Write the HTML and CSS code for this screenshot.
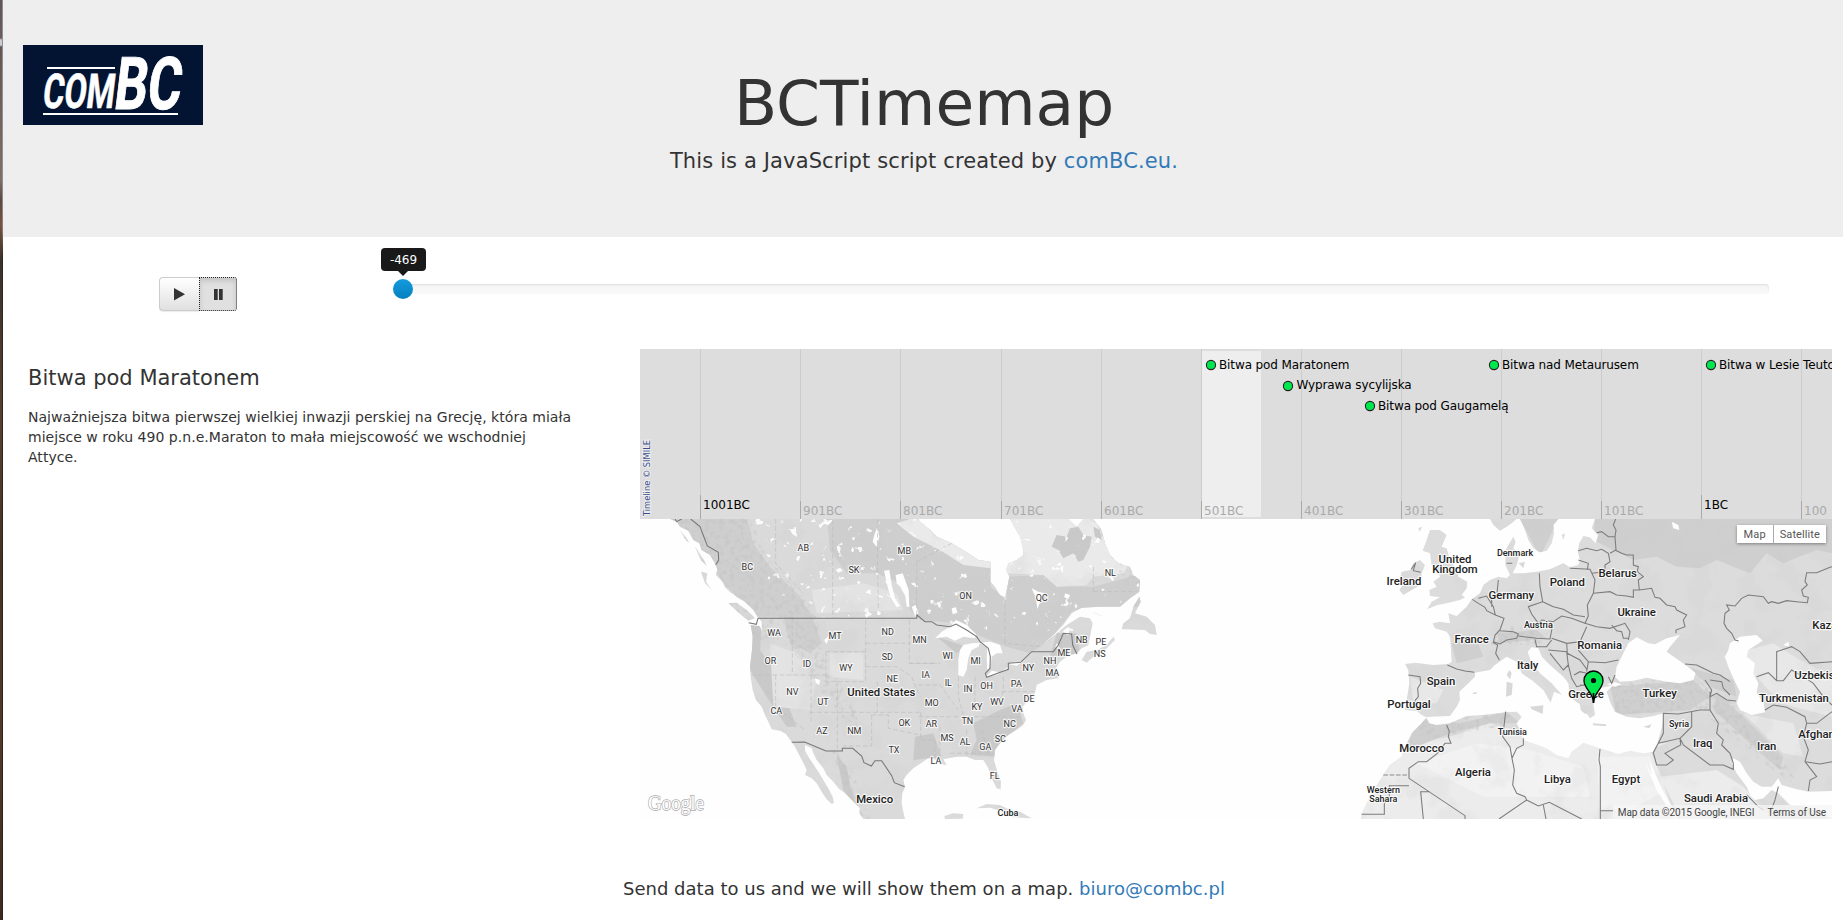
FILE: index.html
```html
<!DOCTYPE html>
<html lang="en">
<head>
<meta charset="utf-8">
<title>BCTimemap</title>
<link rel="stylesheet" href="styles.css">
</head>
<body>
<div class="edge"></div>
<main class="page">
  <header class="jumbotron">
    <svg class="logo" viewBox="0 0 180 80" width="180" height="80">
      <rect width="180" height="80" fill="#031432"/>
      <path d="M24 23H92M20 69H155" stroke="#fff" stroke-width="2"/>
      <g fill="#fff" stroke="#fff" font-family="Roboto" font-weight="700">
        <text transform="translate(18.500 62.500) skewX(-7)" font-size="48" stroke-width=".6" textLength="72" lengthAdjust="spacingAndGlyphs">COM</text>
        <text transform="translate(89.500 63.500) skewX(-7)" font-size="73" stroke-width="1" textLength="67" lengthAdjust="spacingAndGlyphs">BC</text>
      </g>
    </svg>
    <h1 class="title">BCTimemap</h1>
    <p class="lead">This is a JavaScript script created by <a href="#">comBC.eu.</a></p>
  </header>

  <section class="controls">
    <div class="btn-group">
      <button class="btn"><svg width="11" height="13" viewBox="0 0 11 13"><path d="M0 0 11 6.2 0 12.4z" fill="#333"/></svg></button>
      <button class="btn active"><svg width="9" height="11" viewBox="0 0 9 11"><path d="M0 0h3.7v11H0zM5 0h3.7v11H5z" fill="#333"/></svg></button>
    </div>
    <div class="slider">
      <div class="track"></div>
      <div class="handle"></div>
      <div class="tooltip">-469</div>
    </div>
  </section>

  <section class="content">
    <article class="story">
      <h2>Bitwa pod Maratonem</h2>
      <p>Najważniejsza bitwa pierwszej wielkiej inwazji perskiej na Grecję, która miała miejsce w roku 490 p.n.e.Maraton to mała miejscowość we wschodniej Attyce.</p>
    </article>
    <div class="timemap">
      <svg class="timeline" viewBox="640 349 1192 170" width="1192" height="170">
        <rect x="640" y="349" width="1192" height="170" fill="#ddd"/>
        <rect x="1202" y="351" width="59" height="166" fill="#eee"/>
        <path stroke="#ccc" d="M700.5 349v170M800.5 349v170M900.5 349v170M1001.5 349v170M1101.5 349v170M1201.5 349v170M1301.5 349v170M1401.5 349v170M1501.5 349v170M1601.5 349v170M1701.5 349v170M1801.5 349v170"/>
        <path stroke="#aaa" d="M700.5 495v24M800.5 501v18M900.5 501v18M1001.5 501v18M1101.5 501v18M1201.5 501v18M1301.5 501v18M1401.5 501v18M1501.5 501v18M1601.5 501v18M1701.5 495v24M1801.5 501v18"/>
        <g class="minor">
          <text x="803" y="515">901BC</text><text x="903" y="515">801BC</text><text x="1004" y="515">701BC</text><text x="1104" y="515">601BC</text><text x="1204" y="515">501BC</text><text x="1304" y="515">401BC</text><text x="1404" y="515">301BC</text><text x="1504" y="515">201BC</text><text x="1604" y="515">101BC</text><text x="1804" y="515">100</text>
        </g>
        <g class="major"><text x="703" y="509">1001BC</text><text x="1704" y="509">1BC</text></g>
        <g fill="#00e64d" stroke="#222" stroke-width="1.1">
          <circle cx="1211" cy="365" r="4.6"/><circle cx="1288" cy="386" r="4.6"/><circle cx="1370" cy="406" r="4.6"/><circle cx="1494" cy="365" r="4.6"/><circle cx="1711" cy="365" r="4.6"/>
        </g>
        <g class="event">
          <text x="1219" y="369">Bitwa pod Maratonem</text>
          <text x="1296.500" y="389">Wyprawa sycylijska</text>
          <text x="1378" y="410">Bitwa pod Gaugamelą</text>
          <text x="1502" y="369">Bitwa nad Metaurusem</text>
          <text x="1719" y="369">Bitwa w Lesie Teutoburskim</text>
        </g>
        <text class="simile" transform="translate(650 516) rotate(-90)" textLength="76" lengthAdjust="spacingAndGlyphs">Timeline © SIMILE</text>
      </svg>

      <div class="map">
        <svg viewBox="640 519 1192 300" width="1192" height="300">
          <defs>
            <filter id="mottle" x="0" y="0" width="100%" height="100%">
              <feTurbulence type="fractalNoise" baseFrequency=".035" numOctaves="5" seed="8"/>
              <feColorMatrix values="0 0 0 0 .6  0 0 0 0 .6  0 0 0 0 .6  6 0 0 0 -3.1"/>
            </filter>
            <filter id="relief" x="0" y="0" width="100%" height="100%">
              <feTurbulence type="fractalNoise" baseFrequency=".2" numOctaves="3" seed="3"/>
              <feColorMatrix values="0 0 0 0 .55  0 0 0 0 .55  0 0 0 0 .55  5 0 0 0 -2.5"/>
            </filter>
            <filter id="lakes" x="0" y="0" width="100%" height="100%">
              <feTurbulence type="fractalNoise" baseFrequency=".11" numOctaves="3" seed="21"/>
              <feColorMatrix values="0 0 0 0 1  0 0 0 0 1  0 0 0 0 1  14 0 0 0 -9.6"/>
            </filter>
            <path id="america" transform="translate(630 510) scale(.33333)" d="M120 27 140 35 150 50 175 62 190 90 208 100 215 120 240 135 258 165 262 180 258 195 275 212 285 232 300 245 322 262 345 275 370 300 383 320 395 335 396 362 388 348 362 345 368 380 366 420 360 470 362 500 368 540 378 570 395 590 405 615 415 635 425 658 450 662 468 672 485 695 495 710 505 730 518 755 530 780 525 795 545 805 560 820 575 845 590 868 605 882 612 878 608 860 595 835 580 810 565 785 548 760 538 745 525 722 525 705 545 715 550 730 560 750 580 775 590 795 610 815 625 835 645 850 660 865 675 880 690 895 688 910 700 927H825L820 905 815 880 817 850 825 830 820 810 830 795 850 775 865 765 895 745 915 748 930 762 950 765 940 748 980 740 1010 740 1035 750 1060 750 1075 775 1085 805 1100 835 1112 838 1113 815 1102 785 1092 750 1095 720 1110 700 1135 675 1160 660 1180 645 1188 630 1180 610 1178 590 1195 570 1215 550 1220 525 1250 510 1285 505 1288 490 1278 475 1290 455 1310 440 1340 430 1355 415 1375 405 1380 380 1388 340 1380 325 1350 320 1310 345 1280 370 1250 395 1236 405 1270 375 1300 345 1325 310 1355 293 1410 290 1470 290 1500 265 1528 245 1530 210 1510 195 1500 170 1480 165 1460 155 1440 135 1425 100 1415 60 1390 27H1360L1340 50 1315 27H1140L1155 55 1170 80 1178 110 1180 135 1160 150 1135 160 1128 180 1138 200 1132 230 1125 262 1110 255 1095 230 1082 215V155L1045 150 1015 130 965 100 920 80 900 60 870 35 865 27z
             M1528 260 1532 275 1515 310 1550 320 1575 345 1580 375 1560 372 1545 360 1475 358 1480 340 1500 325 1510 290zM1355 450 1370 425 1400 420 1430 405 1450 380 1455 390 1425 420 1390 440 1370 458zM1385 305 1425 320 1405 315zM295 280 320 278 350 300 375 325 355 332 330 312zM213 185 232 190 228 215 245 240 225 220zM150 60 170 85 178 100 165 88zM195 110 222 150 230 168 212 150zM1040 895 1070 882 1110 885 1140 900 1170 905 1205 925 1150 922 1120 905 1080 893zM943 918 970 910 1000 912 998 926 945 927z"/>
            <path id="oldworld" transform="translate(1350 510) scale(.33333)" d="M165 462 195 458 250 465 295 462 305 455 303 420 300 380 290 365 255 355 248 340 270 335 300 340 295 310 320 318 350 290 365 268 390 250 400 225 420 210 445 200 470 205 480 195 466 165 467 120 490 80 497 95 490 115 510 130 500 165 488 190 520 190 560 185 600 178 640 160 660 172 685 165 690 150 683 125 688 100 700 78 720 82 737 100 745 75 725 55 735 27H1446V927H33L35 912 55 870 75 835 100 795 120 765 155 740 165 710 185 670 215 640 230 622 215 615 200 603 165 600 170 570 178 520 175 480z
             M155 185 180 180 190 160 210 150 225 165 215 190 212 225 185 240 160 255 148 240 165 215 150 205zM228 95 240 60 270 60 290 75 275 110 290 115 300 150 320 180 325 200 352 215 350 235 335 255 345 262 330 270 290 280 262 285 232 297 245 275 270 262 240 258 238 240 260 230 250 215 270 200 262 180 245 165 240 130 218 122zM205 55 215 50 210 65zM420 27 430 45 450 62 470 50 485 40 500 27zM510 27 525 60 535 90 550 115 570 127 590 122 605 100 612 70 610 45 625 27zM506 160 525 155 520 175zM635 75 645 70 640 90z"/>
            <clipPath id="landclip"><use href="#america"/><use href="#oldworld"/></clipPath>
            <clipPath id="northclip"><path d="M740 519H1150V610L1070 650 900 618H800L760 570z"/></clipPath>
            <clipPath id="hills"><path d="M668 519H750L770 560 815 610 825 660 860 715 855 735 820 690 800 660 780 640H760L710 590zM1090 519H1160L1180 570 1130 590zM1500 625 1550 630 1540 645 1490 645zM1610 685 1690 675 1730 700 1790 770 1800 790 1760 760 1700 710 1610 715zM1410 720 1510 710V725L1420 740zM828 740 852 770 870 819H855z"/></clipPath>
          </defs>
          <rect x="640" y="519" width="1192" height="300" fill="#fefefe"/>
          <use href="#america" fill="#dadada"/>
          <use href="#oldworld" fill="#dcdcdc"/>
          <g clip-path="url(#landclip)">
            <g transform="translate(630 510) scale(.33333)">
              <path fill="#cecece" d="M590 20H870L965 100 1082 160V230L1130 270 1128 200 1250 195 1280 230 1390 230 1540 190V290L1330 300 1260 390 1200 430 1130 410 1030 370 985 340 870 330 840 300 830 230 740 190 650 190 600 120z"/>
              <path fill="#cfcfcf" d="M120 20H350L370 100 420 170 510 260 550 330 575 400 540 430 480 400 460 320H370L250 180z"/>
              <path fill="#eaeaea" d="M860 20 900 60 1082 155V175L1000 165 930 120 850 80 800 40zM1140 20H1390L1425 90 1500 160 1480 190 1390 200 1370 225 1280 230 1240 195 1130 190 1120 150 1180 130z"/>
              <path fill="#c9c9c9" d="M1265 110 1280 75 1310 80 1320 55 1345 50 1360 75 1385 80 1380 110 1360 150 1345 155 1330 130 1300 145 1285 120zM1390 50 1410 60 1415 90 1395 80zM1030 640 1110 600 1160 580 1180 640 1130 680 1095 740 1020 735 1040 690zM360 345 395 350 390 420 440 490 480 600 500 650 470 650 410 560 360 480zM855 680 910 670 935 740 850 750zM620 735 650 770 665 850 700 920 640 840zM920 380 1010 410 980 430zM1280 370 1340 370 1350 430 1260 440z"/>
              <path fill="#e3e3e3" d="M420 400 500 430 560 510 540 600 430 590zM600 430 700 430 700 510 600 500zM545 240 700 220 800 250 820 300 560 310z"/>
            </g>
            <g transform="translate(1350 510) scale(.33333)">
              <path fill="#ececec" d="M20 940V800L180 700 300 680 420 640 560 680 950 700 900 720 930 790 980 940zM1100 780 1180 830 1240 900 1300 940H1000L930 800z"/>
              <path fill="#f2f2f2" d="M200 760 380 700 540 720 700 770 720 860 400 860zM740 740H900L930 850 840 900H750z"/>
              <path fill="#cfcfcf" d="M735 20H1446V130L1400 120 1300 160 1250 130 1200 190 1150 170 1100 150 1050 175 980 170 920 140 850 150 730 90zM510 27H625L570 140zM200 640 240 620 330 640 470 605 510 640 420 640 300 670 200 710 160 730zM440 370 560 360 590 385 450 400zM305 400 380 390 400 440 320 460zM780 530 1030 510 1080 560 1020 600 800 615zM1010 470 1150 510 1160 560 1080 530zM1100 550 1180 620 1300 740 1290 780 1200 700 1090 600z"/>
              <path fill="#e8e8e8" d="M1120 440 1270 400 1350 450 1446 500V620L1290 580 1220 500zM1180 610 1330 640 1360 740 1300 730zM180 500 280 540 260 580 190 580z"/>
            </g>
            <rect x="640" y="519" width="1192" height="300" filter="url(#mottle)" opacity=".17"/>
            <g clip-path="url(#hills)"><rect x="640" y="519" width="1192" height="300" filter="url(#relief)" opacity=".5"/></g>
            <g clip-path="url(#northclip)"><rect x="640" y="519" width="1192" height="300" filter="url(#lakes)" opacity=".9"/></g>
          </g>
          <g transform="translate(630 510) scale(.33333)">
            <path fill="#fefefe" d="M915 385 935 365 960 350 978 330 1010 345 1038 372 1035 385 1000 380 975 392 950 380zM1000 405 1025 400 1050 398 1045 410 1025 420 1015 445 1010 480 1000 500 985 495V450L990 420zM1050 398 1080 395 1110 405 1118 430 1100 430 1085 440 1082 470 1072 480 1070 440 1072 415zM1068 500 1085 482 1110 487 1135 470 1130 480 1100 495zM1135 462 1155 455 1178 457 1160 467zM762 182 778 180 785 225 795 265 810 288 800 292 782 262 774 235zM797 195 818 190 836 240 838 290 830 290 826 258 812 232 800 220zM565 45 580 40 572 55zM580 40 612 27 595 45zM733 75 742 50 748 80 740 110 728 95zM617 180 630 173 638 182 625 188zM665 85 675 80 672 92zM965 295 978 292 982 308 968 313zM1205 235 1225 245 1245 250 1230 275 1222 298 1218 265zM1305 250 1320 255 1315 268 1303 262zM1290 175 1300 165 1298 190zM555 505 570 510 568 525 558 520zM582 390 600 375 590 402zM845 290 858 285 865 310 855 318zM352 295 365 305 385 325 370 318z"/>
            <path fill="none" stroke="#bdbdbd" stroke-width="2" stroke-dasharray="14 7" d="M437 27V160L520 250M608 27V325M743 27 742 130 745 295M707 330V515M707 400H840M707 470H800L845 500 870 560M487 325V495M365 495H590M588 425V515H705M588 425H705M622 515V715M540 607H870M437 495V590L525 660M543 495V640M742 515V607M725 615V708H640M725 615H775V655L870 675M838 330V460H920M865 525H930L985 600M872 607V690L915 690V745M860 155 965 100M860 155V320M1125 262V400L1240 410M840 460H930M865 620H1180M985 500V560L1000 615M1035 500V580M1115 545H1220M1010 660V740M1055 660 1075 730M930 650V740M960 730H1090M1120 500V545L1100 590M1390 245H1520M1390 170V245"/>
            <path fill="none" stroke="#777" stroke-width="3.200" d="M135 27 140 35 155 27M182 27 210 50 232 108 265 127 266 150 257 165M356 338 379 343 384 325H860L861 315 885 335 905 335 920 345 960 350 978 342 1010 360 1040 380 1050 395 1075 415 1081 440 1080 475 1066 490 1070 502 1135 478V460L1172 457 1205 425H1270L1285 405 1300 370 1325 372 1328 405 1341 432M485 697 524 696 588 723H637V715H668L695 738 702 758 724 768 735 752H755L785 797 793 818 824 830"/>
          </g>
          <g transform="translate(1350 510) scale(.33333)">
            <path fill="#fefefe" d="M228 622 245 620 300 618 320 590 330 570 328 545 355 520 375 500 375 488 420 480 435 465 470 440 500 455 515 490 545 510 580 540 602 578 612 545 636 555 605 520 570 490 545 460 533 425 545 412 565 415 575 440 600 465 640 500 655 520 660 560 688 582 720 625 735 615 730 580 745 555 745 535 770 530 790 525 770 545 780 575 795 605 830 620 870 625 910 618 942 610 935 655 925 690 910 725 880 730 840 722 805 732 750 715 700 698 665 725 655 745 620 735 590 715 545 698 520 690 510 660 500 640 515 620 500 605 465 607 400 615 350 618 300 640 260 645 238 640z
             M795 500 800 470 820 430 835 400 860 382 895 400 915 403 950 385 990 375 960 410 950 425 985 450 1020 475 1037 490 1030 510 990 520 950 515 890 503 850 512 810 515zM1140 400 1170 380 1220 375 1238 392 1195 420 1190 440 1215 460 1210 490 1225 520 1220 550 1240 575 1245 607 1205 615 1170 600 1160 580 1170 545 1155 515 1135 470 1125 440 1135 420zM1446 843 1375 845 1340 838 1295 825 1285 805 1265 830 1235 830 1210 815 1190 790 1170 755 1150 745 1145 760 1160 790 1190 830 1200 855 1215 870 1240 865 1265 840 1285 850 1320 885 1370 890 1446 927zM985 927 960 880 935 835 915 790 905 765 900 750 905 795 885 757 898 790 920 840 945 880 970 927zM965 35 985 45 988 60 970 55zM770 522 795 517 815 523 795 530zM1300 405 1315 395 1318 410z"/>
            <path fill="#d8d8d8" d="M478 480 485 490 480 508 470 495zM470 515 488 520 485 555 468 560zM540 590 580 586 578 612 545 598zM728 640 768 643V649L730 646zM880 650 905 643 898 655zM365 550 380 545 378 553zM690 585 725 590 725 607 705 612 692 600z"/>
            <path fill="none" stroke="#7c7c7c" stroke-width="3.200" d="M175 495 210 500 212 520 203 535 205 560 195 572 203 600M292 465 320 477 345 483 373 487M184 178 197 158 190 182 212 187M367 268 385 280 405 292 410 302 436 315 462 325 450 360 435 375 430 398 443 405 437 430 448 450M385 265 410 258 430 290 436 315M445 210 440 260 425 265 425 290M450 362 490 365 505 372 500 385 470 390 450 402 430 395M568 190 570 230 578 275 535 290 545 312 565 340 575 330 610 335M578 275 610 290 640 298 670 315 705 320M610 335 635 318 665 325 705 340 715 318M505 378 560 385 600 387 608 345M605 385 650 400 690 395 710 350M555 388 560 410 590 410 605 390M595 420 650 425 655 465 640 480 600 430M650 400 652 430 690 450 712 480M655 465 665 505 680 530 720 520M705 340 740 350 780 355 825 340 840 365 835 390M715 455 765 458 805 450M690 395 685 420 715 455 710 485M672 495 690 485 710 490M660 175 720 178 735 210 730 250 712 285 715 320M685 122 710 115 740 122 755 118 775 130 780 155 765 165 765 185 725 190M685 150 715 160 712 180M740 68 755 65 775 80 795 80 798 120 780 130M797 27 790 45 798 60 795 80M730 250 780 245 800 255 830 258 850 262 850 240 868 240 865 210 880 200 862 185 865 170 850 165 850 135 830 135 815 130 795 120M868 240 905 235 915 262 930 265 950 285 975 290 980 300 1010 315 1000 330 1005 350 978 360V370M785 345 800 362 815 365 820 385 835 385M1005 462 1040 465 1060 475 1090 490 1110 495 1140 515M1065 510 1085 540 1080 560 1100 550 1130 570 1158 573M1080 545 1080 600 1105 640 1100 670 1120 690 1115 705 1140 730 1150 760 1150 778 1120 765 1080 765 1000 705 990 685 925 700 940 670V610L985 612 1050 600 1080 600M1080 510 1115 515 1120 535 1140 555M1025 605 1025 650 990 685M990 685 992 705 945 730 970 750 950 765 920 765 910 728 925 700M1166 393 1155 390 1145 370 1130 355 1122 340 1125 310 1138 300 1130 285 1155 288 1175 265 1195 255 1240 260 1255 280 1265 275 1285 280 1310 272 1340 275 1372 278 1375 262 1360 258 1355 240 1372 225 1365 215 1370 188 1400 188 1440 172 1446 170M1220 500 1255 488 1280 512H1300L1325 480 1360 500 1390 520 1420 560 1446 585M1280 512V425L1325 410 1350 425 1380 460 1446 455M1245 600 1270 585 1310 592 1365 620 1370 640 1400 640 1446 605M1370 640 1360 680 1375 720 1365 755 1400 800 1380 810 1375 843M1365 755 1410 762 1446 755M290 645 298 665 295 680 303 700H285L262 730 230 755H205L177 775V805L345 917V927M177 827H118V860L103 880V913H35M240 845H212L220 927M467 605 463 640 458 680 480 710 486 745 500 715 520 705V685M486 745 493 780 488 825 500 850 525 860 530 870 447 927M530 870 565 888 598 877 695 927M580 885 588 927M750 717 747 750 751 770V927M751 902H790M775 500 785 520 795 495M1190 855 1225 890 1240 900M1285 830 1275 870 1260 910M740 530 690 525M470 160H487"/>
            <path d="M100 795H175" stroke="#aaa" stroke-width="4" stroke-dasharray="14 5"/>
          </g>
          <g class="labels small" transform="translate(630 519) scale(.33333) translate(0 -17)">
            <text x="520" y="114">AB</text><text x="352" y="171">BC</text><text x="672" y="180">SK</text><text x="823" y="123">MB</text><text x="432" y="369">WA</text><text x="615" y="378">MT</text><text x="773" y="366">ND</text><text x="869" y="390">MN</text><text x="421" y="453">OR</text><text x="531" y="462">ID</text><text x="648" y="474">WY</text><text x="772" y="441">SD</text><text x="787" y="507">NE</text><text x="487" y="546">NV</text><text x="579" y="576">UT</text><text x="439" y="603">CA</text><text x="576" y="663">AZ</text><text x="673" y="663">NM</text><text x="823" y="639">OK</text><text x="792" y="720">TX</text><text x="1007" y="258">ON</text><text x="1235" y="264">QC</text><text x="1441" y="189">NL</text><text x="953" y="438">WI</text><text x="1037" y="453">MI</text><text x="887" y="495">IA</text><text x="955" y="519">IL</text><text x="1014" y="537">IN</text><text x="1070" y="528">OH</text><text x="1159" y="522">PA</text><text x="1195" y="474">NY</text><text x="1260" y="453">NH</text><text x="1302" y="429">ME</text><text x="1355" y="390">NB</text><text x="1413" y="396">PE</text><text x="1409" y="432">NS</text><text x="1267" y="489">MA</text><text x="1197" y="567">DE</text><text x="1161" y="597">VA</text><text x="1101" y="576">WV</text><text x="1041" y="591">KY</text><text x="905" y="579">MO</text><text x="904" y="642">AR</text><text x="1012" y="633">TN</text><text x="1139" y="642">NC</text><text x="1111" y="687">SC</text><text x="1066" y="711">GA</text><text x="1005" y="696">AL</text><text x="951" y="684">MS</text><text x="918" y="753">LA</text><text x="1094" y="796">FL</text><text class="dark" x="1134" y="909">Cuba</text>
          </g>
          <g class="labels" transform="translate(630 519) scale(.33333) translate(0 -16)"><text x="754" y="546">United States</text><text x="734" y="867">Mexico</text></g>
          <g class="labels small" transform="translate(1350 519) scale(.33333) translate(0 -17)">
            <text class="dark" x="495" y="129">Denmark</text><text class="dark" x="565" y="345">Austria</text><text class="dark" x="487" y="666">Tunisia</text><text class="dark" x="987" y="642">Syria</text><text class="dark" x="100" y="840">Western</text><text class="dark" x="100" y="867">Sahara</text>
          </g>
          <g class="labels" transform="translate(1350 519) scale(.33333) translate(0 -16)">
            <text x="315" y="147">United</text><text x="315" y="177">Kingdom</text><text x="162" y="213">Ireland</text><text x="652" y="216">Poland</text><text x="484" y="255">Germany</text><text x="365" y="387">France</text><text x="533" y="465">Italy</text><text x="273" y="513">Spain</text><text x="177" y="582">Portugal</text><text x="708" y="552">Greece</text><text x="215" y="714">Morocco</text><text x="369" y="786">Algeria</text><text x="622" y="807">Libya</text><text x="803" y="189">Belarus</text><text x="860" y="306">Ukraine</text><text x="749" y="405">Romania</text><text x="929" y="549">Turkey</text><text x="1058" y="699">Iraq</text><text x="1250" y="708">Iran</text><text x="828" y="807">Egypt</text><text x="1098" y="864">Saudi Arabia</text><text x="1332" y="564">Turkmenistan</text>
            <g class="start"><text x="1387" y="345">Kazakhstan</text><text x="1333" y="495">Uzbekistan</text><text x="1345" y="672">Afghanistan</text></g>
          </g>
          <path d="M1593.500 703C1593.500 692 1584 689.500 1584 680.500a9.500 9.500 0 0 1 19 0C1603 689.500 1593.500 692 1593.500 703z" fill="#00e64d" stroke="#000" stroke-width="1.300"/>
          <path d="M1593.500 693v10" stroke="#000" stroke-width="1.600"/>
          <circle cx="1593.500" cy="680.500" r="2.600"/>
          <text class="google" x="648" y="810" textLength="56" lengthAdjust="spacingAndGlyphs">Google</text>
        </svg>
        <div class="maptype"><span>Map</span><span>Satellite</span></div>
        <div class="credits"><span>Map data ©2015 Google, INEGI</span><span>Terms of Use</span></div>
      </div>
    </div>
  </section>
  <footer class="footer">Send data to us and we will show them on a map. <a href="#">biuro@combc.pl</a></footer>
</main>
</body>
</html>
```
FILE: styles.css
```css
* { box-sizing: border-box; }
body { margin: 0; height: 920px; overflow: hidden; display: flex; background: #fff; color: #333; font-family: "DejaVu Sans", Verdana, sans-serif; font-size: 14px; line-height: 20px; }
a { color: #337ab7; text-decoration: none; }
h1, h2, p { margin: 0; font-weight: 400; }
.edge { width: 3px; border-right: 1px solid #444; border-image: linear-gradient(#8590a5 0, #8d8f98 180px, #8d7a6c 230px, #302720 256px, #2c211b 100%) 1; background: linear-gradient(#5f5552 0, #6c5d57 38px, #ccc 40px, #ccc 45px, #66564f 47px, #806f67 180px, #594a41 200px, #765340 225px, #3b312c 260px, #57402f 420px, #463225 560px, #523a29 740px, #3c2a20 920px); }
.page { width: 1840px; display: flex; flex-direction: column; }
.jumbotron { position: relative; height: 237px; padding: 69px 0 0 2px; background: #eee; text-align: center; }
.logo { position: absolute; left: 20px; top: 45px; }
.title { font-size: 63px; line-height: 69px; }
.lead { margin-top: 8px; font-size: 21px; line-height: 30px; letter-spacing: .13px; }
.controls { height: 112px; display: flex; align-items: flex-start; padding: 40px 74px 0 156px; }
.btn-group { display: flex; width: 78px; height: 34px; margin-right: 163px; }
.btn { display: flex; align-items: center; justify-content: center; width: 40px; padding: 0; border: 1px solid #ccc; border-right: 0; border-radius: 4px 0 0 4px; background: linear-gradient(#fff, #e0e0e0); box-shadow: 0 1px 1px rgba(0,0,0,.08); }
.btn.active { width: 38px; border: 1px dotted #222; border-radius: 0 3px 3px 0; background: #e0e0e0; box-shadow: inset 0 3px 5px rgba(0,0,0,.125); }
.slider { position: relative; flex: 1; padding-top: 7px; }
.track { height: 10px; border-radius: 4px; background: linear-gradient(#f5f5f5, #f9f9f9); box-shadow: inset 0 1px 2px rgba(0,0,0,.1); }
.handle { position: absolute; left: -7px; top: 2px; width: 20px; height: 20px; border-radius: 50%; background: linear-gradient(#149bdf, #0480be); }
.tooltip { position: absolute; left: -19px; top: -29px; width: 45px; height: 23px; border-radius: 4px; background: #191919; color: #fff; font-size: 12px; line-height: 25px; text-align: center; }
.tooltip::after { content: ""; position: absolute; left: 17px; top: 23px; border: 5px solid transparent; border-top-color: #191919; border-bottom: 0; }
.content { display: flex; height: 470px; }
.story { width: 637px; padding: 16px 65px 0 25px; }
.story h2 { font-size: 21px; line-height: 27px; }
.story p { margin-top: 15px; letter-spacing: .035px; }
.timemap { width: 1192px; }
svg { display: block; }
.timeline text { font-size: 12px; }
.minor text { fill: #aaa; }
.major text, .event text { fill: #000; }
.timeline .event text { letter-spacing: -.11px; }
.timeline .simile { font-size: 9px; fill: #3a4f8f; stroke: #eee; stroke-width: 2px; paint-order: stroke; }
.map { position: relative; height: 300px; font-family: Roboto, sans-serif; }
.labels text { font-family: Roboto, sans-serif; font-size: 34px; font-weight: 500; fill: #222; stroke: rgba(255,255,255,.75); stroke-width: 7px; stroke-linejoin: round; paint-order: stroke; text-anchor: middle; }
.labels.small text { font-size: 27px; font-weight: 400; fill: #333; }
.labels.small .dark { font-weight: 500; fill: #222; }
.labels .start text { text-anchor: start; }
.google { font-family: "Liberation Serif", serif; font-size: 21px; fill: #fff; stroke: #aaa; stroke-width: 1.4px; paint-order: stroke; }
.maptype { position: absolute; right: 6px; top: 6px; display: flex; height: 18px; background: #fff; box-shadow: 0 1px 3px rgba(0,0,0,.4); color: #565656; font-size: 11px; line-height: 19px; }
.maptype span { padding: 0 6px; letter-spacing: .1px; }
.maptype span + span { border-left: 1px solid #aaa; }
.maptype span:first-child { padding: 0 7px; }
.credits { position: absolute; right: 0; bottom: 0; display: flex; height: 14px; padding: 0 6px 0 5px; gap: 13px; background: rgba(245,245,245,.75); color: #444; font-size: 10px; line-height: 15px; letter-spacing: -.06px; }
.footer { height: 101px; padding: 57px 0 0 2px; text-align: center; font-size: 18px; line-height: 26px; letter-spacing: .01px; }
```
